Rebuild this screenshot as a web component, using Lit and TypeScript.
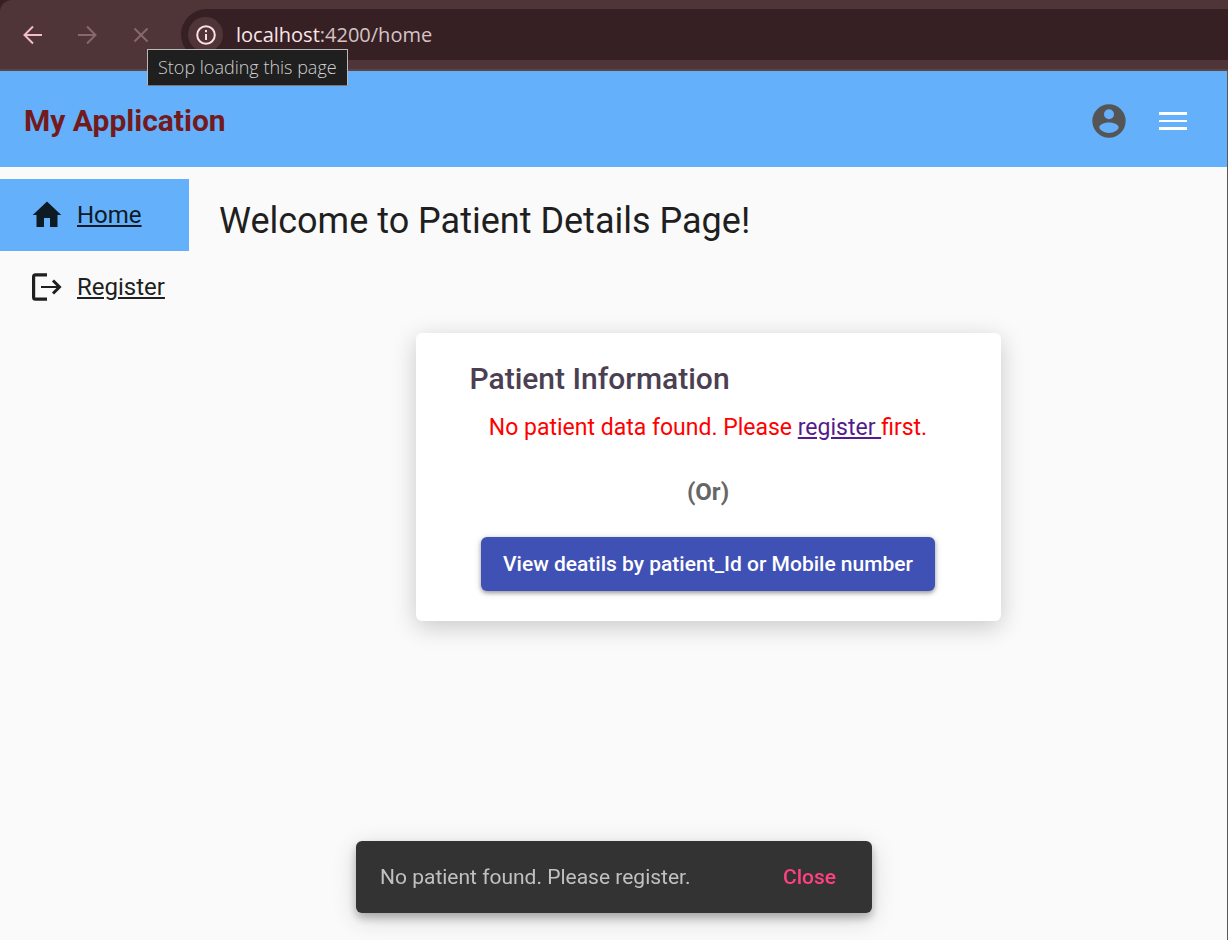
import { LitElement, html, css } from "lit";
import { customElement } from "lit/decorators.js";

@customElement("browser-bar")
class BrowserBar extends LitElement {
  static styles = css`
    :host {
      display: block;
      position: relative;
      background: #372023;
      font-family: "Open Sans", "Noto Sans", sans-serif;
    }
    .bar {
      display: flex;
      align-items: center;
      height: 69px;
      padding-left: 18px;
      background: #4f3438;
      border-top-left-radius: 12px;
      border-bottom: 2px solid #5d4447;
    }
    .nav {
      display: flex;
      gap: 24px;
    }
    button {
      display: flex;
      align-items: center;
      justify-content: center;
      width: 30px;
      height: 30px;
      padding: 0;
      border: 0;
      background: none;
      color: #87696d;
    }
    .back {
      color: #f3bcc6;
    }
    svg {
      display: block;
    }
    .address {
      display: flex;
      flex: 1;
      align-items: center;
      gap: 13px;
      height: 51px;
      margin-left: 25px;
      padding-left: 7px;
      background: #372023;
      border-radius: 26px 0 0 26px;
    }
    .info {
      width: 35px;
      height: 35px;
      border-radius: 50%;
      background: #4f3438;
      color: #fbdfe3;
    }
    .url {
      font-size: 20px;
      line-height: 28px;
      color: #d5c3c5;
    }
    .host {
      color: #fbe6e9;
    }
    .tip {
      position: absolute;
      z-index: 2;
      top: 49px;
      left: 147px;
      padding: 5px 10px 6px;
      border: 1px solid #b9b9b9;
      border-bottom-color: #777;
      background: #1f1f1f;
      color: #d0d0d0;
      font-size: 18px;
      font-weight: 300;
      line-height: 24px;
      white-space: nowrap;
    }
  `;

  render() {
    return html`
      <div class="bar">
        <div class="nav">
          <button class="back" aria-label="Back">
            <svg width="20" height="20" viewBox="0 0 20 20" fill="none" stroke="currentColor" stroke-width="2">
              <path d="M19 10H2M10 1.5L1.5 10L10 18.5" />
            </svg>
          </button>
          <button aria-label="Forward">
            <svg width="20" height="20" viewBox="0 0 20 20" fill="none" stroke="currentColor" stroke-width="2">
              <path d="M1 10H18M10 1.5L18.5 10L10 18.5" />
            </svg>
          </button>
          <button aria-label="Stop" aria-describedby="tip">
            <svg width="16" height="16" viewBox="0 0 16 16" fill="none" stroke="currentColor" stroke-width="2">
              <path d="M1.5 1.5L14.5 14.5M14.5 1.5L1.5 14.5" />
            </svg>
          </button>
        </div>
        <div class="address">
          <button class="info" aria-label="Site information">
            <svg width="20" height="20" viewBox="0 0 20 20" fill="none" stroke="currentColor" stroke-width="2">
              <circle cx="10" cy="10" r="8.8" />
              <path d="M10 9v6M10 5v2.2" />
            </svg>
          </button>
          <span class="url"><span class="host">localhost</span>:4200/home</span>
        </div>
      </div>
      <div class="tip" id="tip" role="tooltip">Stop loading this page</div>
    `;
  }
}

@customElement("app-root")
class AppRoot extends LitElement {
  static styles = css`
    :host {
      display: flex;
      flex-direction: column;
      min-height: 100vh;
      background: #fafafa;
      color: #1f1f1f;
      font-family: Roboto, sans-serif;
      font-size: 24px;
      line-height: 36px;
    }
    .view {
      display: flex;
      flex: 1;
      flex-direction: column;
      border-right: 1px solid #5d5558;
    }
    .toolbar {
      display: flex;
      align-items: center;
      box-sizing: border-box;
      height: 96px;
      padding: 4px 36px 0 24px;
      background: #64b0fb;
    }
    .brand {
      flex: 1;
      color: #731a1c;
      font-size: 30px;
      font-weight: 700;
    }
    .tools {
      display: flex;
      gap: 28px;
    }
    .tools button {
      display: flex;
      align-items: center;
      justify-content: center;
      width: 36px;
      height: 36px;
      padding: 0;
      border: 0;
      background: none;
      color: #fff;
    }
    .tools .account {
      color: #555;
    }
    svg {
      flex: none;
    }
    .body {
      display: flex;
      flex: 1;
      padding-top: 12px;
    }
    nav {
      width: 189px;
    }
    nav a {
      display: flex;
      align-items: center;
      gap: 12px;
      height: 72px;
      padding-left: 29px;
      color: #1f1f1f;
    }
    nav .active {
      background: #64b0fb;
      color: #0e1a24;
    }
    main {
      display: flex;
      flex: 1;
      flex-direction: column;
    }
    h1 {
      margin: 0;
      padding: 18px 30px 0;
      font-size: 36px;
      font-weight: 400;
      line-height: 48px;
    }
    .card {
      display: flex;
      flex-direction: column;
      align-self: center;
      align-items: center;
      box-sizing: border-box;
      width: 585px;
      margin-top: 88px;
      padding: 24px 54px 30px;
      border-radius: 6px;
      background: #fff;
      box-shadow: 0 6px 24px rgba(0, 0, 0, 0.2);
    }
    h2 {
      align-self: stretch;
      margin: 0;
      color: #4a4052;
      font-size: 30px;
      font-weight: 500;
      line-height: 44px;
    }
    .missing {
      margin: 9px 0 0;
      color: #f00;
      font-size: 23px;
      white-space: nowrap;
    }
    .missing a {
      color: #551a8b;
    }
    .or {
      margin: 28px 0 27px;
      color: #666;
      font-weight: 700;
    }
    .lookup {
      height: 54px;
      padding: 0 22px;
      border: 0;
      border-radius: 6px;
      background: #3f51b5;
      box-shadow: 0 2px 4px rgba(0, 0, 0, 0.35), 0 1px 8px rgba(0, 0, 0, 0.12);
      color: #fff;
      font: 500 21px Roboto, sans-serif;
      white-space: nowrap;
    }
    .snack {
      position: fixed;
      bottom: 27px;
      left: 50%;
      display: flex;
      align-items: center;
      justify-content: space-between;
      box-sizing: border-box;
      width: 516px;
      height: 72px;
      padding: 0 12px 0 24px;
      border-radius: 6px;
      background: #333;
      box-shadow: 0 5px 8px rgba(0, 0, 0, 0.25), 0 6px 24px rgba(0, 0, 0, 0.16);
      color: #c1c1c1;
      font-size: 21px;
      transform: translateX(-50%);
    }
    .close {
      height: 54px;
      padding: 0 24px;
      border: 0;
      background: none;
      color: #ff4081;
      font: 500 21px Roboto, sans-serif;
    }
  `;

  render() {
    return html`
      <browser-bar></browser-bar>
      <div class="view">
        <header class="toolbar">
          <span class="brand">My Application</span>
          <div class="tools">
            <button class="account" aria-label="Account">
              <svg width="40" height="40" viewBox="0 0 24 24" fill="currentColor">
                <path fill-rule="evenodd" d="M12 2a10 10 0 1 0 0 20a10 10 0 0 0 0-20ZM12 5a3 3 0 1 1 0 6a3 3 0 0 1 0-6ZM12 19.2C9 19.2 6.2 17.4 6.2 15.8C6.2 14 9.5 12.9 12 12.9S17.8 14 17.8 15.8C17.8 17.4 15 19.2 12 19.2Z" />
              </svg>
            </button>
            <button aria-label="Menu">
              <svg width="28" height="18" viewBox="0 0 28 18" fill="currentColor">
                <path d="M0 0h28v3H0zM0 8h28v2H0zM0 15h28v3H0z" />
              </svg>
            </button>
          </div>
        </header>
        <div class="body">
          <nav>
            <a class="active" href="#home">
              <svg width="36" height="36" viewBox="0 0 24 24" fill="currentColor">
                <path d="M10 20v-6h4v6h5v-8h2.5L12 3L2.5 12H5v8z" />
              </svg>
              <span>Home</span>
            </a>
            <a href="#register">
              <svg width="36" height="36" viewBox="0 0 36 36" fill="none" stroke="currentColor">
                <path stroke-width="3.2" d="M18 5.8H6.5Q4.6 5.8 4.6 7.7V28.3Q4.6 30.2 6.5 30.2H18" />
                <path stroke-width="2" d="M12 18H31" />
                <path stroke-width="3" d="M24 11.5L30.5 18L24 24.5" />
              </svg>
              <span>Register</span>
            </a>
          </nav>
          <main>
            <h1>Welcome to Patient Details Page!</h1>
            <section class="card">
              <h2>Patient Information</h2>
              <p class="missing">No patient data found. Please <a href="#register">register </a>first.</p>
              <div class="or">(Or)</div>
              <button class="lookup">View deatils by patient_Id or Mobile number</button>
            </section>
          </main>
        </div>
      </div>
      <div class="snack" role="status">
        <span>No patient found. Please register.</span>
        <button class="close">Close</button>
      </div>
    `;
  }
}
